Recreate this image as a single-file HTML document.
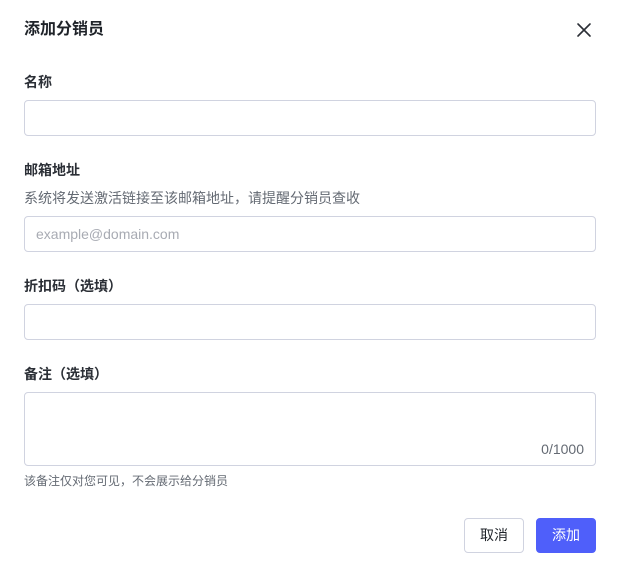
<!DOCTYPE html>
<html><head><meta charset="utf-8"><style>
*{box-sizing:border-box;margin:0;padding:0}
body{width:620px;height:568px;background:#fff;font-family:"Liberation Sans","Noto Sans CJK SC",sans-serif;position:relative;overflow:hidden;color:#1f2329}
.a{position:absolute}
.t{left:24px;top:19px;font-size:16px;font-weight:bold;line-height:22px;color:#1f2329}
.l{left:24px;font-size:14px;font-weight:bold;line-height:20px;color:#2b2f36}
.h{left:24px;font-size:14px;line-height:20px;color:#646a73}
.in{left:24px;width:572px;height:36px;border:1px solid #d0d3e0;border-radius:4px;background:#fff}
.btn{top:518px;width:60px;height:35px;border-radius:4px;font-size:14px;line-height:33px;text-align:center}
</style></head><body>
<div class="a t">添加分销员</div>
<svg class="a" style="left:576px;top:22px" width="16" height="16" viewBox="0 0 16 16"><path d="M2 2L14 14M14 2L2 14" stroke="#2b2f36" stroke-width="1.6" stroke-linecap="round"/></svg>
<div class="a l" style="top:72px">名称</div>
<div class="a in" style="top:100px"></div>
<div class="a l" style="top:160px">邮箱地址</div>
<div class="a h" style="top:188px">系统将发送激活链接至该邮箱地址，请提醒分销员查收</div>
<div class="a in" style="top:216px;padding-left:11px;font-size:14px;line-height:34px;color:#a8abb3">example@domain.com</div>
<div class="a l" style="top:276px">折扣码（选填）</div>
<div class="a in" style="top:304px"></div>
<div class="a l" style="top:364px">备注（选填）</div>
<div class="a in" style="top:392px;height:74px"></div>
<div class="a" style="right:36px;top:439px;font-size:14px;line-height:20px;color:#646a73">0/1000</div>
<div class="a" style="left:24px;top:473px;font-size:12px;line-height:17px;color:#646a73">该备注仅对您可见，不会展示给分销员</div>
<div class="a btn" style="left:464px;border:1px solid #d0d3e0;color:#1f2329">取消</div>
<div class="a btn" style="left:536px;background:#4f5ffa;color:#fff;border:1px solid #4f5ffa">添加</div>
</body></html>
